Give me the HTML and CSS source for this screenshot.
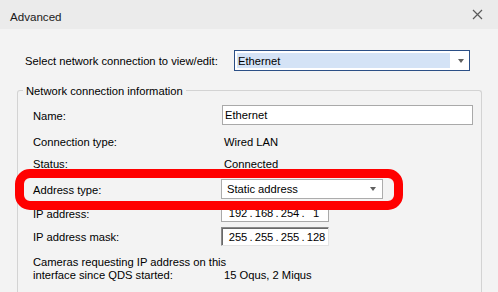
FILE: index.html
```html
<!DOCTYPE html>
<html>
<head>
<meta charset="utf-8">
<link rel="stylesheet" href="styles.css">
</head>
<body>
<div class="dialog">
  <div class="titlebar">
    <span class="title">Advanced</span>
    <svg class="close" width="11" height="11" viewBox="0 0 11 11"><path d="M1 1 L10 10 M10 1 L1 10" stroke="#5a5a5a" stroke-width="1.2" fill="none"/></svg>
  </div>
  <div class="content">
    <div class="select-row">
      <span class="select-label">Select network connection to view/edit:</span>
      <div class="combo combo-focus">
        <span class="combo-sel">Ethernet</span>
        <span class="arrow"></span>
      </div>
    </div>
    <fieldset class="group">
      <legend>Network connection information</legend>
      <div class="rows">
        <div class="row r-name">
          <span class="label">Name:</span>
          <div class="textbox name-box">Ethernet</div>
        </div>
        <div class="row r-conn">
          <span class="label">Connection type:</span>
          <span class="value">Wired LAN</span>
        </div>
        <div class="row r-status">
          <span class="label">Status:</span>
          <span class="value">Connected</span>
        </div>
        <div class="row r-addr">
          <span class="label">Address type:</span>
          <div class="combo combo-plain">
            <span class="combo-text">Static address</span>
            <span class="arrow"></span>
          </div>
        </div>
        <div class="row r-ip">
          <span class="label">IP address:</span>
          <div class="ipbox">
            <span class="oct">192</span><span class="dot">.</span><span class="oct">168</span><span class="dot">.</span><span class="oct">254</span><span class="dot">.</span><span class="oct">1</span>
          </div>
        </div>
        <div class="row r-mask">
          <span class="label">IP address mask:</span>
          <div class="ipbox sunken">
            <span class="oct">255</span><span class="dot">.</span><span class="oct">255</span><span class="dot">.</span><span class="oct">255</span><span class="dot">.</span><span class="oct">128</span>
          </div>
        </div>
        <div class="row r-cams">
          <span class="label cams-label">Cameras requesting IP address on this<br>interface since QDS started:</span>
          <span class="value cams-value">15 Oqus, 2 Miqus</span>
        </div>
      </div>
    </fieldset>
  </div>
  <div class="highlight"></div>
</div>
</body>
</html>
```

FILE: styles.css
```css
* { box-sizing: border-box; }
html, body { margin: 0; padding: 0; }
body {
  width: 498px;
  height: 292px;
  overflow: hidden;
  background: #f3f3f3;
  font-family: "Liberation Sans", Arial, sans-serif;
  font-size: 11.2px;
  color: #000;
}
.dialog { position: relative; width: 498px; height: 292px; overflow: hidden; }
.titlebar {
  height: 29px;
  background: #ebebeb;
  display: flex;
  align-items: center;
  justify-content: space-between;
  padding: 4px 15px 0 10px;
}
.title { color: #1a1a1a; font-size: 11.6px; }
.close { margin-top: -4px; }
.content { padding: 21px 0 0 0; }
.select-row {
  display: flex;
  align-items: center;
  height: 21px;
  padding-left: 25px;
}
.select-label { width: 209px; padding-top: 1px; }
.combo {
  position: relative;
  display: flex;
  align-items: center;
  background: #fff;
}
.combo-focus {
  width: 236px;
  height: 21px;
  border: 1px solid #2b4f86;
  padding: 2px;
}
.combo-sel {
  flex: 1;
  height: 100%;
  background: #d4e3f6;
  display: flex;
  align-items: center;
  padding-left: 1px;
  margin-right: 17px;
}
.combo-plain {
  width: 162px;
  height: 20px;
  border: 1px solid #acacac;
  margin-left: -1px;
  padding-left: 5px;
}
.combo-text { flex: 1; }
.arrow {
  width: 0;
  height: 0;
  border-left: 3.5px solid transparent;
  border-right: 3.5px solid transparent;
  border-top: 4px solid #606060;
  margin-right: 6px;
}
.combo-focus .arrow { position: absolute; right: 5px; top: 8px; margin: 0; }
.group {
  margin: 12px 0 0 17px;
  width: 465px;
  height: 215px;
  border: 1px solid #d3d3d3;
  border-bottom: none;
  border-radius: 3px 3px 0 0;
  padding: 0;
}
.group legend {
  margin-left: 5px;
  padding: 0 3px;
  line-height: 14px;
  position: relative;
  top: 1px;
}
.rows {
  padding: 8px 0 0 15px;
  display: flex;
  flex-direction: column;
}
.row { display: flex; align-items: center; }
.label { width: 189px; flex: none; padding-top: 1px; }
.value { padding-left: 2px; padding-top: 1px; }
.textbox {
  background: #fff;
  border: 1px solid #a9a9a9;
  display: flex;
  align-items: center;
  padding-left: 2px;
}
.name-box { width: 251px; height: 20px; }
.r-name { height: 20px; }
.r-conn { height: 20px; margin-top: 6px; }
.r-status { height: 20px; margin-top: 2px; }
.r-addr { height: 20px; margin-top: 6px; }
.r-ip { height: 18px; margin-top: 5px; }
.r-mask { height: 19px; margin-top: 5px; }
.r-cams { margin-top: 9px; align-items: flex-end; line-height: 13px; }
.ipbox {
  margin-left: -1px;
  width: 108px;
  height: 100%;
  background: #fff;
  border: 1px solid #a9a9a9;
  display: flex;
  align-items: center;
  padding-left: 6px;
}
.sunken {
  border-color: #8a8a8a #e3e3e3 #e3e3e3 #8a8a8a;
  box-shadow: inset 1px 1px 0 #696969;
}
.oct { width: 20px; text-align: center; }
.dot { width: 6px; text-align: center; }
.cams-label { width: 191px; white-space: nowrap; }
.cams-value { padding-left: 0; }
.highlight {
  position: absolute;
  left: 15px;
  top: 169px;
  width: 388px;
  height: 41px;
  border: 9px solid #ff0000;
  border-radius: 15px;
}
```
